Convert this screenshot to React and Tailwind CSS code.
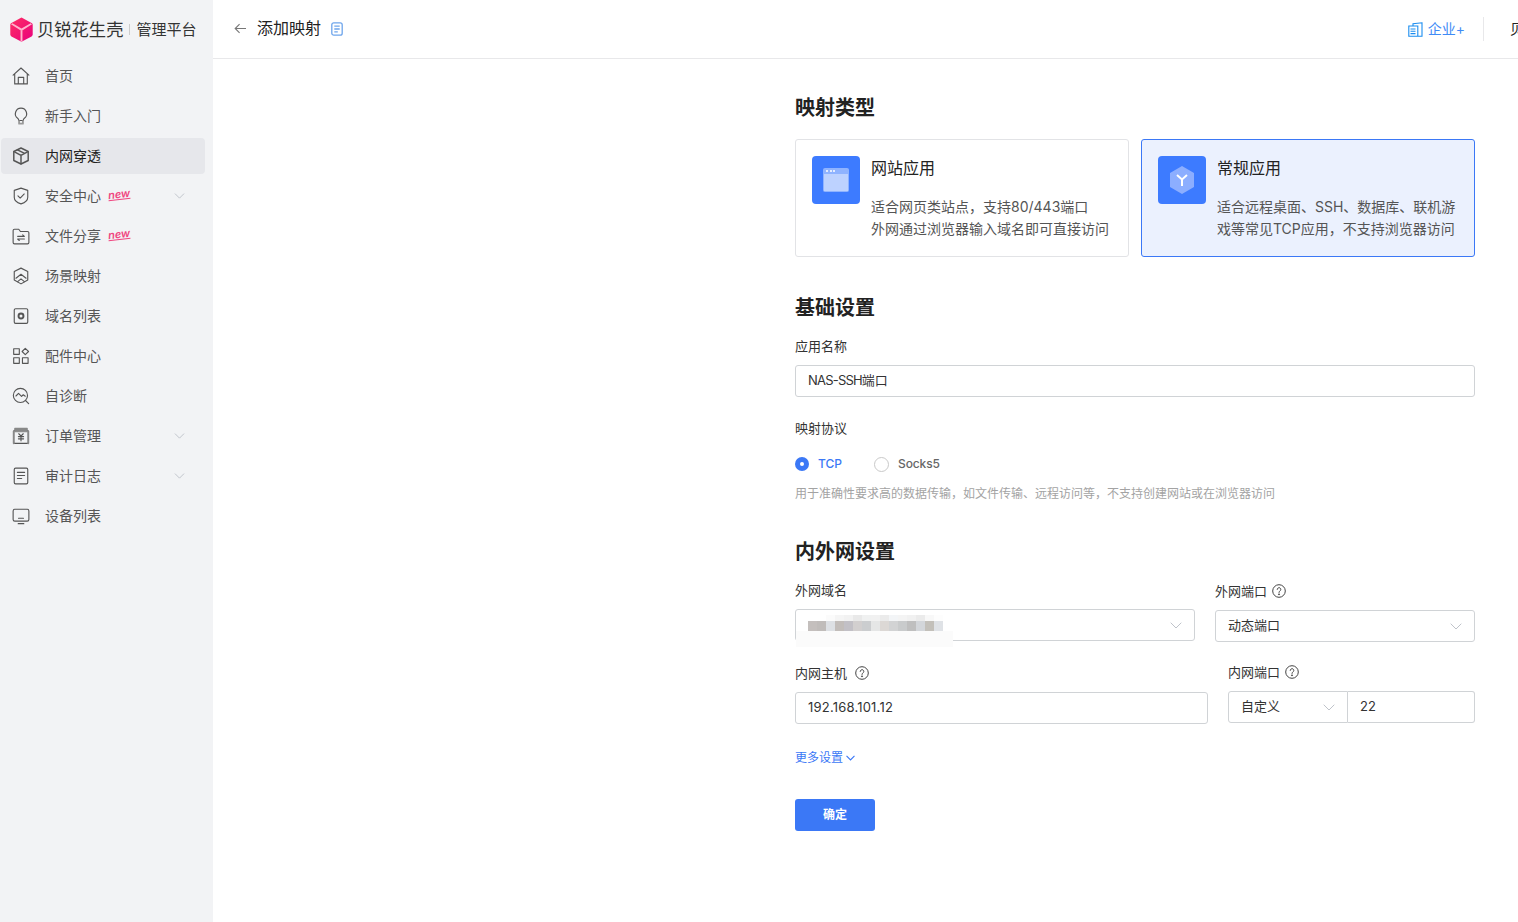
const sw = { fill: "none", stroke: "currentColor", strokeWidth: 1, strokeLinejoin: "round", strokeLinecap: "round" };
const Ico = ({ children, className = "w-[18px] h-[18px]" }) => <svg viewBox="0 0 16 16" className={`shrink-0 ${className}`} {...sw}>{children}</svg>;

const icons = {
  home: <Ico><path d="M1 7.2 8 .9l7 6.3M2.4 6.2V15h11.2V6.2M5.6 15V9.2h4.8V15" /></Ico>,
  bulb: <Ico><path d="M8 1a5 5 0 0 0-3 9c.6.5 1 1 1.1 2h3.8c.1-1 .5-1.5 1.1-2A5 5 0 0 0 8 1Z" /><path d="M6.3 12.5v2.3h3.4v-2.3" strokeWidth="1.6" stroke="#999" /></Ico>,
  cube: <Ico className="w-[18px] h-[18px]"><path d="M8 .9 14.4 4v8L8 15.1 1.6 12V4Z" strokeWidth="1.3" /><path d="M1.8 4.2 8 7.4l6.2-3.2M8 7.4v7.5M4.8 2.5l6.4 3.2" strokeWidth="1.3" /></Ico>,
  shield: <Ico><path d="M8 1 14 3v6c0 3-3 5-6 6-3-1-6-3-6-6V3Z" /><path d="m5.3 7.8 2 2 3.6-3.6" /></Ico>,
  folder: <Ico><path d="M1 3.2c0-.7.5-1.2 1.200-1.200H6l1.500 2h6.300c.7 0 1.200.5 1.200 1.200v8.600c0 .7-.5 1.200-1.200 1.200H2.200C1.500 15 1 14.500 1 13.800Z" /><path d="M5 8.300h6l-1.500-1.300M11 10.700H5l1.500 1.300" /></Ico>,
  scene: <Ico><path d="M8 1 14 4v7.500L8 15l-6-3.500V4Z" /><path d="M3.500 10 8 6.500l4.500 3.500M5 13 8 10.500l3 2.500" /></Ico>,
  domain: <Ico><rect x="2" y="1.500" width="12" height="13" rx="1.200" /><circle cx="8" cy="8" r="2.200" strokeWidth="1.700" /></Ico>,
  grid: <Ico><rect x="1.500" y="1.500" width="5" height="5" /><path d="m11.800 1.200 2.900 2.800-2.900 2.800L9 4Z" /><rect x="1.500" y="9.500" width="5" height="5" /><rect x="9.300" y="9.500" width="5" height="5" /></Ico>,
  diag: <Ico><circle cx="7.500" cy="7.500" r="6.300" /><path d="m3.500 8 2.300-2.300 2.700 2.700 1.500-1.500 1.800 1.300M12 12l2.800 2.800" /></Ico>,
  order: <Ico><rect x="1.500" y="3" width="13" height="11.500" rx="1" /><rect x="2.500" y="1.200" width="11" height="3" fill="#888" stroke="#888" /><path d="m6 6 2 2 2-2M5.700 8.500h4.600M5.700 10.500h4.600M8 8v4.300" /><path d="M1.500 4v10.500" strokeWidth="1.600" stroke="#888" /><path d="M14.500 4v10.500" strokeWidth="1.600" stroke="#888" /></Ico>,
  audit: <Ico><rect x="2" y="1" width="12" height="14" rx="1.200" /><path d="M4.800 4.800h6.400M4.800 7.500h6.400M4.800 10.200h3.800" /></Ico>,
  device: <Ico><rect x="1" y="2" width="14" height="10.500" rx="1.500" /><path d="M5.500 14.800h5M5.800 10h4.400" /></Ico>,
};

const Chevron = ({ className = "w-3 h-[7px]", stroke = 1 }) => (
  <svg viewBox="0 0 12 7" className={`shrink-0 ${className}`} fill="none" stroke="currentColor" strokeWidth={stroke}><path d="m.7.7 5.300 5.300L11.300.7" /></svg>
);

const New = () => (
  <span className="ml-[7px] -mt-1 inline-block -rotate-6 border-b border-[#f0457f] text-[11px] leading-[10px] font-semibold italic text-[#f0457f]">new</span>
);

const menu = [
  ["home", "首页"],
  ["bulb", "新手入门"],
  ["cube", "内网穿透", { active: true }],
  ["shield", "安全中心", { isNew: true, arrow: true }],
  ["folder", "文件分享", { isNew: true }],
  ["scene", "场景映射"],
  ["domain", "域名列表"],
  ["grid", "配件中心"],
  ["diag", "自诊断"],
  ["order", "订单管理", { arrow: true }],
  ["audit", "审计日志", { arrow: true }],
  ["device", "设备列表"],
];

const Item = ({ icon, label, active, isNew, arrow }) => (
  <div className={`flex h-9 items-center rounded pl-3 pr-5 ${active ? "bg-[#e6e7eb] text-[#222]" : "text-[#555]"}`}>
    <span className="flex w-4 justify-center text-[#555]">{icons[icon]}</span>
    <span className="ml-[16px] text-[14px] leading-none">{label}</span>
    {isNew && <New />}
    {arrow && <Chevron className="ml-auto h-[6px] w-[11px] text-[#b9bdc6]" />}
  </div>
);

const Logo = () => (
  <svg viewBox="0 0 24 26" className="h-[25px] w-[23px] shrink-0">
    <defs>
      <linearGradient id="lg" x1="0" y1="0" x2="1" y2="1"><stop offset="0" stopColor="#ff2f63" /><stop offset="1" stopColor="#e8007e" /></linearGradient>
    </defs>
    <path d="M12 0.500 22.500 6.200c.7.400 1.200 1.200 1.200 2v10c0 .8-.5 1.600-1.200 2L12 25.800 1.500 20.200C.8 19.800.3 19 .3 18.200v-10c0-.8.5-1.600 1.200-2Z" fill="url(#lg)" />
    <path d="M12 14.500 1 7.500 2.500 6.500 12 12 21.500 6.500 23 7.500 12 14.500Z" fill="#ffb3cb" />
    <path d="M11 14h2v11.500h-2z" fill="#ffb3cb" />
  </svg>
);

const Help = () => (
  <svg viewBox="0 0 14 14" className="h-[14px] w-[14px] shrink-0 text-[#444]" fill="none" stroke="currentColor" strokeWidth="1">
    <circle cx="7" cy="7" r="6.300" />
    <path d="M5.200 5.400a1.800 1.800 0 1 1 2.700 1.600c-.6.400-.9.700-.9 1.400" strokeLinecap="round" />
    <circle cx="7" cy="10.300" r=".5" fill="currentColor" />
  </svg>
);

const H2 = ({ children, className = "" }) => <h2 className={`text-[20px] font-bold leading-7 text-[#222] ${className}`}>{children}</h2>;
const Label = ({ children, className = "" }) => <div className={`flex items-center text-[13px] leading-5 text-[#333] ${className}`}>{children}</div>;

const Box = ({ children, className = "" }) => (
  <div className={`flex h-8 items-center justify-between border border-[#d0d3d6] px-3 text-[13px] text-[#333] ${className}`}>{children}</div>
);

const dark = ["#c4bfbd", "#c0bcba", "#dde0e4", "#c2bdba", "#c2c0c6", "#d2cfcf", "#cbcdcf", "#e5e6e6", "#dcd8d5", "#d2d3d4", "#c9cbcc", "#bfbfbf", "#d3d6da", "#c3c0ba", "#dfe2e6"];
const light = ["#fff", "#fff", "#fbfbfb", "#f5f5f5", "#f2f2f2", "#e9e9e9", "#f0f1f1", "#f1f1f1", "#ebebeb", "#f3f5f7", "#f4f4f4", "#f1f1f1", "#ebebeb", "#f8f8f8", "#fdfdfd"];

const Mosaic = () => (
  <div className="absolute left-[12px] top-[5px]">
    <div className="flex">{light.map((c, i) => <div key={i} className="h-[6px] w-[9px]" style={{ backgroundColor: c }} />)}</div>
    <div className="flex">{dark.map((c, i) => <div key={i} className="h-[10px] w-[9px]" style={{ backgroundColor: c }} />)}</div>
    <div className="-ml-[12px] h-[16px] w-[157px] bg-[#fbfbfb]" />
  </div>
);

const Card = ({ active, icon, title, lines }) => (
  <div className={`flex h-[118px] w-[334px] rounded-[3px] border p-4 ${active ? "border-[#3b78f6] bg-[#ebf1fe]" : "border-[#e2e3e6] bg-white"}`}>
    <div className="h-12 w-12 shrink-0 rounded-[4px] bg-[#3d7bff] flex items-center justify-center">{icon}</div>
    <div className="ml-[11px] min-w-0">
      <div className="text-[16px] leading-6 text-[#222]">{title}</div>
      <div className="mt-[16px] whitespace-nowrap text-[14px] leading-[22px] text-[#555]">
        {lines.map((l) => <div key={l}>{l}</div>)}
      </div>
    </div>
  </div>
);

export default function App() {
  return (
    <div className="flex h-[922px] w-[1518px] overflow-hidden bg-white font-['Inter','Noto_Sans_CJK_SC',sans-serif]">
      <aside className="h-full w-[213px] shrink-0 bg-[#f2f3f5] pl-px pr-2">
        <div className="flex h-[58px] items-center pl-[9px] pt-px">
          <Logo />
          <span className="ml-[4px] whitespace-nowrap text-[17.3px] leading-none text-[#333]">贝锐花生壳</span>
          <span className="mx-[6px] h-[11px] w-px bg-[#ccc]" />
          <span className="whitespace-nowrap text-[15px] leading-none text-[#333]">管理平台</span>
        </div>
        <nav className="flex flex-col gap-1">
          {menu.map(([icon, label, o]) => <Item key={label} icon={icon} label={label} {...o} />)}
        </nav>
      </aside>

      <div className="flex min-w-0 flex-1 flex-col">
        <header className="flex h-[59px] shrink-0 items-center border-b border-[#e8e8ea] pl-[21px]">
          <svg viewBox="0 0 14 12" className="-mt-[2px] h-[11px] w-[13px] text-[#777]" fill="none" stroke="currentColor" strokeWidth="1.200"><path d="M13 6H1.500M6 1.200 1.200 6 6 10.800" /></svg>
          <span className="-mt-[2px] ml-[10px] text-[16px] leading-none text-[#222]">添加映射</span>
          <svg viewBox="0 0 12 14" className="ml-[10px] h-[14px] w-[12px]" fill="none" stroke="#6ea5ec" strokeWidth="1.300"><rect x=".8" y=".8" width="10.400" height="12.400" rx="2" /><path d="M3.300 4.200h5.400M3.300 7h5.400M3.300 9.800h3.500" /></svg>
          <div className="ml-auto flex items-center">
            <svg viewBox="0 0 15 15" className="h-[15px] w-[15px]" fill="none" stroke="#1b8df0" strokeWidth="1.100"><path d="M.8 4h9v10.300h-9zM5 4V1.800L14 .8v13.500H9.800" /><path d="M2.500 7h5M2.500 9.300h5M2.500 11.600h5" /></svg>
            <span className="ml-[5px] text-[14px] leading-none text-[#3f8bf6]">企业+</span>
            <span className="ml-[18px] h-6 w-px bg-[#e8e8ea]" />
            <span className="ml-[26px] w-2 overflow-hidden whitespace-nowrap text-[14px] leading-none text-[#222]">贝锐</span>
          </div>
        </header>

        <main className="ml-[582px] w-[680px] pt-[35px]">
          <H2>映射类型</H2>
          <div className="mt-[17px] flex gap-3">
            <Card
              title="网站应用"
              lines={["适合网页类站点，支持80/443端口", "外网通过浏览器输入域名即可直接访问"]}
              icon={
                <div className="h-6 w-[26px] rounded-[2px] bg-[#8fb3ff] pt-[6px] relative">
                  <div className="absolute left-[3px] top-[2px] flex gap-[1.500px]">
                    <span className="h-[2px] w-[2px] rounded-full bg-white" />
                    <span className="h-[2px] w-[2px] rounded-full bg-white" />
                    <span className="h-[2px] w-[2px] rounded-full bg-white" />
                  </div>
                  <div className="mx-auto h-[17px] w-[24px] bg-[#bdd2ff]" />
                </div>
              }
            />
            <Card
              active
              title="常规应用"
              lines={["适合远程桌面、SSH、数据库、联机游", "戏等常见TCP应用，不支持浏览器访问"]}
              icon={
                <svg viewBox="0 0 24 28" className="h-[28px] w-[24px]">
                  <path d="M12 0 24 7v14l-12 7-12-7V7Z" fill="#8caeff" />
                  <path d="M7 9l5 4.500L17 9M12 13.500V20" stroke="#fff" strokeWidth="2" fill="none" />
                </svg>
              }
            />
          </div>

          <H2 className="mt-[37px]">基础设置</H2>
          <Label className="mt-[14px]">应用名称</Label>
          <Box className="mt-[9px] rounded-[3px] justify-start"><span className="tracking-[-0.8px]">NAS-SSH</span><span>端口</span></Box>

          <Label className="mt-[21px]">映射协议</Label>
          <div className="mt-[17px] flex h-[18px] items-center text-[12px] font-medium leading-none">
            <span className="flex h-[14px] w-[14px] items-center justify-center rounded-full bg-[#3b78f6]"><span className="h-1 w-1 rounded-full bg-white" /></span>
            <span className="ml-[9px] text-[#3b78f6]">TCP</span>
            <span className="ml-[32px] h-[15px] w-[15px] rounded-full border border-[#c9c9c9]" />
            <span className="ml-[9px] tracking-[-0.1px] text-[#666]">Socks5</span>
          </div>
          <div className="mt-[11px] whitespace-nowrap text-[12px] leading-5 text-[#a3a3a3]">用于准确性要求高的数据传输，如文件传输、远程访问等，不支持创建网站或在浏览器访问</div>

          <H2 className="mt-[34px]">内外网设置</H2>

          <div className="mt-[14px] flex justify-between">
            <div className="w-[400px]">
              <Label>外网域名</Label>
              <Box className="relative mt-[9px] rounded-[3px]">
                <span />
                <Chevron className="h-[7px] w-3 text-[#bfc3ca]" />
                <Mosaic />
              </Box>
            </div>
            <div className="w-[260px] pt-px">
              <Label>外网端口<span className="ml-[5px]"><Help /></span></Label>
              <Box className="mt-[9px] rounded-[3px]">动态端口<Chevron className="h-[7px] w-3 text-[#bfc3ca]" /></Box>
            </div>
          </div>

          <div className="mt-[21px] flex justify-between">
            <div className="w-[413px]">
              <Label>内网主机<span className="ml-[8px]"><Help /></span></Label>
              <Box className="mt-[9px] rounded-[3px]"><span className="tracking-[0.2px]">192.168.101.12</span></Box>
            </div>
            <div className="-mt-px w-[247px]">
              <Label>内网端口<span className="ml-[5px]"><Help /></span></Label>
              <div className="mt-[9px] flex">
                <Box className="w-[120px] rounded-l-[3px]">自定义<Chevron className="h-[7px] w-3 text-[#bfc3ca]" /></Box>
                <Box className="flex-1 rounded-r-[3px] border-l-0">22</Box>
              </div>
            </div>
          </div>

          <div className="mt-[24px] flex items-center text-[12px] leading-5 text-[#3b78f6]">
            更多设置
            <Chevron className="ml-[3px] h-[6px] w-[9px]" stroke={1.5} />
          </div>

          <button className="mt-[31px] h-8 w-20 rounded-[3px] bg-[#3b78f6] text-[12px] font-semibold text-white">确定</button>
        </main>
      </div>
    </div>
  );
}
